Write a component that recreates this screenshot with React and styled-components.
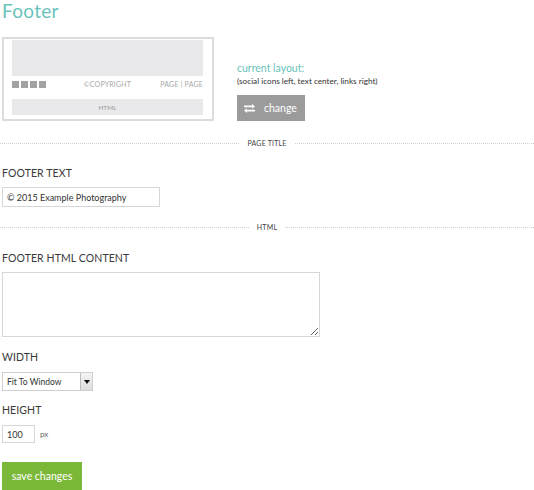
import React from "react";
import styled, { createGlobalStyle } from "styled-components";

const Global = createGlobalStyle`
  html, body { margin: 0; padding: 0; background: #fff; }
  body { font-family: Lato, "Open Sans", sans-serif; color: #3c3c3c; }
  * { box-sizing: border-box; }
`;

let Page = styled.div`
  width: 534px;
  padding: 0 2px;
`;

let Title = styled.h1`
  margin: 0;
  font-size: 19px;
  line-height: 22px;
  font-weight: 400;
  color: #6ac3bb;
  letter-spacing: 0.3px;
`;

let Header = styled.div`
  display: flex;
  align-items: flex-end;
  gap: 23px;
  margin-top: 15px;
`;

let Preview = styled.div`
  width: 212px;
  height: 84px;
  border: 2px solid #dcdcdc;
  padding: 1px 9px 0 8px;
  display: flex;
  flex-direction: column;
`;

let PreviewCanvas = styled.div`
  height: 36px;
  background: #e9e8ea;
`;

let PreviewBar = styled.div`
  display: flex;
  align-items: center;
  justify-content: space-between;
  height: 14px;
  margin-top: 1px;
  font-size: 7px;
  color: #a8a8a8;
  letter-spacing: 0.2px;
`;

let Squares = styled.div`
  display: flex;
  gap: 2px;
  width: 60px;
`;

let Square = styled.span`
  width: 7px;
  height: 7px;
  background: #a3a3a3;
`;

let BarText = styled.span`
  width: ${(p) => p.w || "auto"};
  text-align: ${(p) => p.align || "left"};
`;

let PreviewHtml = styled.div`
  margin-top: 8px;
  height: 16px;
  background: #e9e8ea;
  font-size: 6.5px;
  color: #9a9a9a;
  display: flex;
  align-items: center;
  justify-content: center;
`;

let Info = styled.div`
  display: flex;
  flex-direction: column;
`;

let InfoTitle = styled.div`
  font-size: 10.5px;
  line-height: 12px;
  color: #6ac3bb;
`;

let InfoText = styled.div`
  font-size: 8.2px;
  line-height: 10px;
  margin-top: 2px;
  color: #333;
`;

let ChangeButton = styled.button`
  margin-top: 9px;
  width: 68px;
  height: 26px;
  border: 0;
  background: #9b9b9b;
  color: #fff;
  font-family: inherit;
  font-size: 10.5px;
  display: flex;
  align-items: center;
  gap: 9px;
  padding: 0 0 0 7px;
  cursor: pointer;
`;

let Divider = styled.div`
  display: flex;
  align-items: center;
  gap: 8px;
  margin: ${(p) => p.m || "0"};
  margin-left: -2px;
  margin-right: -2px;
  height: 10px;
  font-size: 7px;
  color: #444;
  letter-spacing: 0.2px;

  &::before, &::after {
    content: "";
    flex: 1;
    border-top: 1px dotted #cfcfcf;
  }
`;

let Label = styled.div`
  margin-top: ${(p) => p.mt || "18px"};
  font-size: 10.5px;
  line-height: 14px;
  color: #3a3a3a;
  letter-spacing: 0.1px;
`;

let TextInput = styled.input`
  display: block;
  margin-top: 7px;
  width: ${(p) => p.w || "158px"};
  height: ${(p) => p.h || "20px"};
  border: 1px solid #d6d6d6;
  padding: 0 4px;
  font-family: inherit;
  font-size: 9px;
  color: #333;
  outline: 0;
`;

let TextArea = styled.textarea`
  display: block;
  margin-top: 7px;
  width: 318px;
  height: 65px;
  border: 1px solid #d6d6d6;
  resize: vertical;
  outline: 0;
`;

let Select = styled.div`
  margin-top: 8px;
  width: 91px;
  height: 19px;
  border: 1px solid #cfcfcf;
  display: flex;
  align-items: stretch;
  font-size: 8.5px;
  color: #333;
`;

let SelectValue = styled.span`
  flex: 1;
  display: flex;
  align-items: center;
  padding-left: 4px;
`;

let SelectArrow = styled.span`
  width: 12px;
  border-left: 1px solid #bdbdbd;
  background: linear-gradient(#f4f4f4, #dcdcdc);
  display: flex;
  align-items: center;
  justify-content: center;

  &::after {
    content: "";
    border-left: 3px solid transparent;
    border-right: 3px solid transparent;
    border-top: 4px solid #111;
  }
`;

let Row = styled.div`
  display: flex;
  align-items: center;
  gap: 5px;
  margin-top: 8px;
  font-size: 8px;
  color: #666;

  & > input { margin-top: 0; }
`;

let SaveButton = styled.button`
  display: block;
  margin-top: 19px;
  width: 80px;
  height: 28px;
  border: 0;
  background: #7bb83a;
  color: #fff;
  font-family: inherit;
  font-size: 10.5px;
  cursor: pointer;
`;

const SwapIcon = () => (
  <svg width="11" height="9" viewBox="0 0 11 9">
    <path d="M0 1.6h8V0l3 2.4-3 2.4V3.2H0z" fill="#fff" />
    <path d="M11 5.8H3V4.2L0 6.6 3 9V7.4h8z" fill="#fff" />
  </svg>
);

export default function App() {
  return (
    <Page>
      <Global />
      <Title>Footer</Title>
      <Header>
        <Preview>
          <PreviewCanvas />
          <PreviewBar>
            <Squares>
              <Square />
              <Square />
              <Square />
              <Square />
            </Squares>
            <BarText>©COPYRIGHT</BarText>
            <BarText w="60px" align="right">PAGE | PAGE</BarText>
          </PreviewBar>
          <PreviewHtml>HTML</PreviewHtml>
        </Preview>
        <Info>
          <InfoTitle>current layout:</InfoTitle>
          <InfoText>(social icons left, text center, links right)</InfoText>
          <ChangeButton>
            <SwapIcon />
            change
          </ChangeButton>
        </Info>
      </Header>

      <Divider m="17px 0 0">PAGE TITLE</Divider>

      <Label>FOOTER TEXT</Label>
      <TextInput defaultValue="© 2015 Example Photography" />

      <Divider m="15px 0 0">HTML</Divider>

      <Label mt="19px">FOOTER HTML CONTENT</Label>
      <TextArea />

      <Label mt="13px">WIDTH</Label>
      <Select>
        <SelectValue>Fit To Window</SelectValue>
        <SelectArrow />
      </Select>

      <Label mt="12px">HEIGHT</Label>
      <Row>
        <TextInput w="33px" h="18px" defaultValue="100" />
        px
      </Row>

      <SaveButton>save changes</SaveButton>
    </Page>
  );
}
